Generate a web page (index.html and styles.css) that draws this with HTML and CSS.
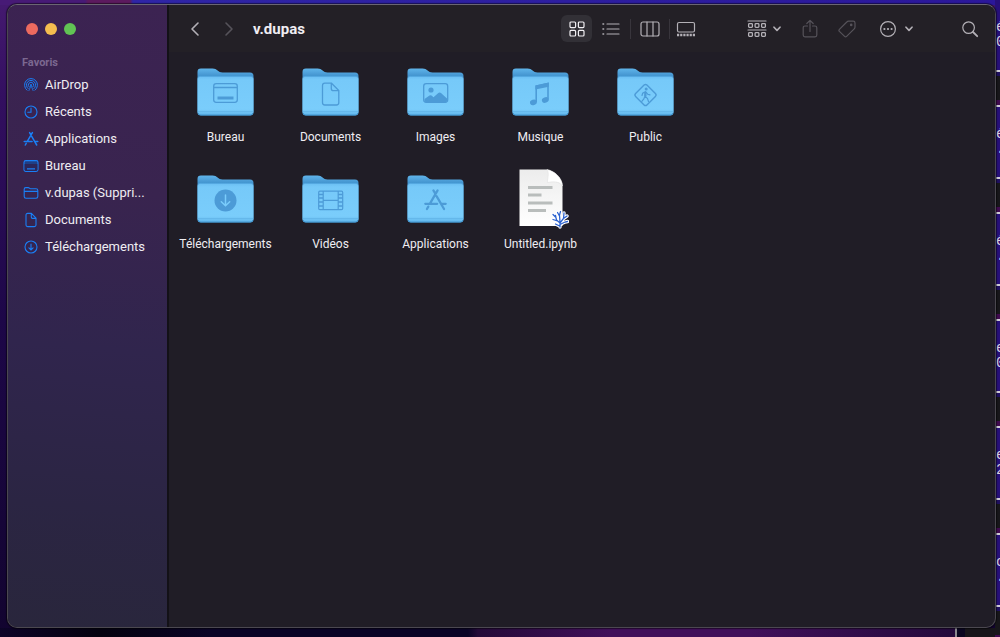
FILE: index.html
```html
<!DOCTYPE html>
<html lang="fr">

<head>
    <meta charset="UTF-8">
    <meta name="viewport" content="width=device-width, initial-scale=1">
    <title>v.dupas</title>
    <link rel="stylesheet" href="styles.css">
</head>

<body>
    <svg class="defs" aria-hidden="true">
        <defs>
            <linearGradient id="folder_back" x1="0" y1="0" x2="0" y2="1">
                <stop offset="0" stop-color="#5fb4ea" />
                <stop offset="0.18" stop-color="#3f8fcb" />
                <stop offset="1" stop-color="#4597d0" />
            </linearGradient>
            <linearGradient id="folder_front" x1="0" y1="0" x2="0" y2="1">
                <stop offset="0" stop-color="#69bdf2" />
                <stop offset="0.1" stop-color="#76c9f9" />
                <stop offset="0.85" stop-color="#7acdfb" />
                <stop offset="1" stop-color="#62b7ec" />
            </linearGradient>
            <linearGradient id="paper" x1="0" y1="0" x2="0" y2="1">
                <stop offset="0" stop-color="#ececec" />
                <stop offset="1" stop-color="#ffffff" />
            </linearGradient>
        </defs>
        <symbol id="folder" viewBox="0 0 57 48">
            <path d="M0.5 4C0.5 1.5 1.5 0.5 4 0.5H15.5C18 0.5 19.2 1.3 20.6 2.5C22 3.7 23.2 4.5 25.5 4.5H53C55.5 4.5 56.5 5.8 56.5 8V44C56.5 46.5 55.5 47.5 53 47.5H4C1.5 47.5 0.5 46.5 0.5 44Z" fill="url(#folder_back)" />
            <path d="M0.5 11C0.5 9 1.6 8 4 8H53C55.4 8 56.5 9 56.5 11V43.5C56.5 46 55.4 47 53 47H4C1.6 47 0.5 46 0.5 43.5Z" fill="url(#folder_front)" />
            <path d="M1.5 9.5C2 8.6 2.8 8.3 4 8.3H53C54.2 8.3 55 8.6 55.5 9.5" fill="none" stroke="#4c9fd9" stroke-width="0.9" />
            <path d="M1 43.5H56" stroke="#62b5e9" stroke-width="0.8" />
            <path d="M1.2 45C1.8 46.5 2.7 47 4 47H53C54.3 47 55.2 46.5 55.8 45" fill="none" stroke="#4397d0" />
        </symbol>
        <symbol id="apps" viewBox="0 0 16 16">
            <path d="M6.6 1.6L8 4M9.4 1.6L4.3 10.4M8.7 5.4L12.6 12.1M1.2 10.5H9.1M12 10.5H14.8M3.2 12.4L2.3 14M12.8 12.5L13.7 14" fill="none" stroke="currentColor" stroke-width="1.5" stroke-linecap="round" />
        </symbol>
        <symbol id="page" viewBox="0 0 16 16">
            <path d="M3 3C3 1.9 3.6 1.4 4.6 1.4H8.4L13 6.2V13C13 14.1 12.4 14.6 11.4 14.6H4.6C3.6 14.6 3 14.1 3 13ZM8.3 1.6V5.1C8.3 6 8.7 6.4 9.5 6.4H12.8" fill="none" stroke="currentColor" stroke-width="1.1" stroke-linejoin="round" />
        </symbol>
        <symbol id="coral" viewBox="0 0 20 20">
            <path d="M10 18V13M10 14L6.5 11L5.5 6.5M7.5 12L3 10.5M6 8.5L3 5.5M10 13L9.5 6L10.5 2.5M9.5 7L7.5 3.5M10 14L13.5 9.5L14 4M13.5 9.5L17 7M11 15L15 13L17.5 12.5M9.5 17L5.5 15" fill="none" stroke="currentColor" stroke-linecap="round" />
        </symbol>
    </svg>

    <!-- terminal window sticking out behind the finder -->
    <div class="terminal">
        <div class="term_block"><span>é</span><span>0</span></div>
        <div class="term_block"><span>é</span><span>.</span></div>
        <div class="term_block"><span>é</span><span>.</span></div>
        <div class="term_block"><span>e</span><span>0</span></div>
        <div class="term_block"><span>e</span><span>2</span></div>
        <div class="term_block"><span>c</span><span>.</span></div>
    </div>

    <div class="finder">
        <aside class="sidebar">
            <div class="lights">
                <button class="light red" aria-label="Fermer"></button>
                <button class="light yellow" aria-label="Réduire"></button>
                <button class="light green" aria-label="Agrandir"></button>
            </div>
            <h2 class="side_title">Favoris</h2>
            <nav class="side_list">
                <a class="side_item" href="#">
                    <svg class="side_icon" viewBox="0 0 16 16" fill="none" stroke="currentColor" stroke-linecap="round">
                        <path d="M4 13.2A6.5 6.5 0 1 1 12 13.2M5.1 11.6A4.6 4.6 0 1 1 10.9 11.6M6.3 10.1A2.7 2.7 0 1 1 9.7 10.1" />
                        <path d="M8 8.6L5.9 13.6M8 8.6L10.1 13.6" stroke-width="0.8" />
                        <circle cx="8" cy="8" r="0.9" fill="currentColor" stroke="none" />
                    </svg>
                    <span>AirDrop</span>
                </a>
                <a class="side_item" href="#">
                    <svg class="side_icon" viewBox="0 0 16 16" fill="none" stroke="currentColor" stroke-width="1.1" stroke-linecap="round">
                        <circle cx="8" cy="8" r="6" />
                        <path d="M8 4V8.3H4.8" />
                    </svg>
                    <span>Récents</span>
                </a>
                <a class="side_item" href="#">
                    <svg class="side_icon"><use href="#apps" /></svg>
                    <span>Applications</span>
                </a>
                <a class="side_item" href="#">
                    <svg class="side_icon" viewBox="0 0 16 16">
                        <rect x="1" y="2.6" width="14" height="10.8" rx="1.8" fill="#1f3f86" stroke="currentColor" stroke-width="1.1" />
                        <path d="M1.6 6H14.4V11.6Q14.4 12.9 13 12.9H3Q1.6 12.9 1.6 11.6Z" fill="#2c2659" />
                        <path d="M4 10.8H12" stroke="currentColor" stroke-width="1.3" />
                    </svg>
                    <span>Bureau</span>
                </a>
                <a class="side_item" href="#">
                    <svg class="side_icon" viewBox="0 0 16 16" fill="none" stroke="currentColor" stroke-width="1.1">
                        <path d="M1.2 4.2C1.2 3 1.8 2.6 2.8 2.6H5.2C6.3 2.6 6.4 3.8 7.5 3.8H13C14.2 3.8 14.8 4.4 14.8 5.4V11.6C14.8 12.8 14.2 13.3 13 13.3H3C1.8 13.3 1.2 12.8 1.2 11.6ZM1.2 6.4H14.8" />
                    </svg>
                    <span>v.dupas (Suppri...</span>
                </a>
                <a class="side_item" href="#">
                    <svg class="side_icon"><use href="#page" /></svg>
                    <span>Documents</span>
                </a>
                <a class="side_item" href="#">
                    <svg class="side_icon" viewBox="0 0 16 16" fill="none" stroke="currentColor" stroke-width="1.1" stroke-linecap="round">
                        <circle cx="8" cy="8" r="6" />
                        <path d="M8 5V10.8M5.9 8.9L8 11L10.1 8.9" />
                    </svg>
                    <span>Téléchargements</span>
                </a>
            </nav>
        </aside>

        <div class="content">
            <header class="toolbar">
                <button class="tool nav" aria-label="Précédent">
                    <svg width="10" height="16" viewBox="0 0 10 16"><path d="M8 2L2 8L8 14" /></svg>
                </button>
                <button class="tool nav off" aria-label="Suivant" disabled>
                    <svg width="10" height="16" viewBox="0 0 10 16"><path d="M2 2L8 8L2 14" /></svg>
                </button>
                <h1 class="title">v.dupas</h1>
                <div class="views">
                    <button class="tool view active" aria-label="Icônes">
                        <svg width="16" height="16" viewBox="0 0 16 16">
                            <rect x="1" y="1" width="5.6" height="5.6" rx="1" />
                            <rect x="9.4" y="1" width="5.6" height="5.6" rx="1" />
                            <rect x="1" y="9.4" width="5.6" height="5.6" rx="1" />
                            <rect x="9.4" y="9.4" width="5.6" height="5.6" rx="1" />
                        </svg>
                    </button>
                    <button class="tool view wide" aria-label="Liste">
                        <svg width="18" height="14" viewBox="0 0 18 14">
                            <path d="M5 2H17M5 7H17M5 12H17" />
                            <path d="M1 2H1.6M1 7H1.6M1 12H1.6" stroke-width="1.6" />
                        </svg>
                    </button>
                    <span class="sep"></span>
                    <button class="tool view wide" aria-label="Colonnes">
                        <svg width="20" height="16" viewBox="0 0 20 16">
                            <rect x="1" y="1" width="18" height="14" rx="2" />
                            <path d="M7 1V15M13 1V15" />
                        </svg>
                    </button>
                    <span class="sep"></span>
                    <button class="tool view" aria-label="Galerie">
                        <svg width="20" height="16" viewBox="0 0 20 16">
                            <rect x="1.5" y="1.5" width="17" height="9.5" rx="1.5" />
                            <path d="M1 14H19" stroke-width="2.4" stroke-dasharray="2.2 0.96" />
                        </svg>
                    </button>
                </div>
                <button class="tool group" aria-label="Grouper">
                    <svg width="20" height="18" viewBox="0 0 20 18">
                        <path d="M1 1H19M1 10H19" />
                        <g stroke-width="1.3">
                            <rect x="1.6" y="3.6" width="3.8" height="3.8" rx="0.8" />
                            <rect x="8.1" y="3.6" width="3.8" height="3.8" rx="0.8" />
                            <rect x="14.6" y="3.6" width="3.8" height="3.8" rx="0.8" />
                            <rect x="1.6" y="12.6" width="3.8" height="3.8" rx="0.8" />
                            <rect x="8.1" y="12.6" width="3.8" height="3.8" rx="0.8" />
                            <rect x="14.6" y="12.6" width="3.8" height="3.8" rx="0.8" />
                        </g>
                    </svg>
                    <svg width="8" height="6" viewBox="0 0 8 6"><path class="arrow" d="M1 1.2L4 4.4L7 1.2" /></svg>
                </button>
                <div class="actions">
                    <button class="tool off" aria-label="Partager" disabled>
                        <svg width="18" height="20" viewBox="0 0 18 20">
                            <path d="M6.5 7H4C2.8 7 2.2 7.6 2.2 8.8V16C2.2 17.2 2.8 17.8 4 17.8H14C15.2 17.8 15.8 17.2 15.8 16V8.8C15.8 7.6 15.2 7 14 7H11.5M9 12.5V1.6M5.8 4.5L9 1.4L12.2 4.5" />
                        </svg>
                    </button>
                    <button class="tool off" aria-label="Tags" disabled>
                        <svg width="18" height="18" viewBox="0 0 18 18">
                            <path d="M1.4 9.4L8.8 2Q9.5 1.2 10.6 1.2H15.2Q17 1.2 17 3V7Q17 8 16.2 8.8L8.6 16.4Q7.6 17.4 6.6 16.4L1.4 11.4Q0.5 10.4 1.4 9.4Z" />
                            <circle cx="13.2" cy="4.9" r="0.7" />
                        </svg>
                    </button>
                </div>
                <button class="tool group" aria-label="Actions">
                    <svg width="18" height="18" viewBox="0 0 18 18">
                        <circle cx="9" cy="9" r="7.4" />
                        <path d="M5.4 9H5.41M9 9H9.01M12.6 9H12.61" stroke-width="2.2" />
                    </svg>
                    <svg width="8" height="6" viewBox="0 0 8 6"><path class="arrow" d="M1 1.2L4 4.4L7 1.2" /></svg>
                </button>
                <button class="tool search" aria-label="Rechercher">
                    <svg width="18" height="18" viewBox="0 0 18 18">
                        <circle cx="7.6" cy="7.6" r="5.8" />
                        <path d="M12 12L16.2 16.2" stroke-width="1.8" />
                    </svg>
                </button>
            </header>

            <main class="files">
                <a class="file" href="#">
                    <svg class="file_icon" viewBox="0 0 57 48">
                        <use href="#folder" />
                        <g fill="none" stroke="#4c9bd7" stroke-width="1.3">
                            <rect x="16.7" y="15.7" width="23.6" height="18.6" rx="2.5" />
                            <path d="M17 19.5H40" />
                            <path d="M20.5 30H36.5" stroke-width="3" />
                        </g>
                    </svg>
                    <span>Bureau</span>
                </a>
                <a class="file" href="#">
                    <svg class="file_icon" viewBox="0 0 57 48">
                        <use href="#folder" />
                        <path d="M20.5 17.5Q20.5 15.2 22.8 15.2H29.5L36.8 22.5V34.5Q36.8 37 34.4 37H22.8Q20.5 37 20.5 34.5ZM29.3 15.4V20.5Q29.3 22.7 31.5 22.7H36.6" fill="none" stroke="#4c9bd7" stroke-width="1.3" />
                    </svg>
                    <span>Documents</span>
                </a>
                <a class="file" href="#">
                    <svg class="file_icon" viewBox="0 0 57 48">
                        <use href="#folder" />
                        <rect x="16.7" y="15.7" width="24" height="18.6" rx="2.5" fill="none" stroke="#4c9bd7" stroke-width="1.3" />
                        <circle cx="24" cy="22" r="2.6" fill="#4c9bd7" />
                        <path d="M17.5 31L22.5 27.5Q23.5 26.8 24.5 27.6L26.5 29.3L31.3 25Q32.7 24 34 25L40 30.5V32.5Q40 34 38.5 34H19Q17.5 34 17.5 32.5Z" fill="#4c9bd7" />
                    </svg>
                    <span>Images</span>
                </a>
                <a class="file" href="#">
                    <svg class="file_icon" viewBox="0 0 57 48">
                        <use href="#folder" />
                        <path d="M24.2 34V18.2L36 15.6V31.5" fill="none" stroke="#4c9bd7" stroke-width="1.6" />
                        <path d="M23.4 17.4L36.8 14.6V18.8L23.4 21.6Z" fill="#4c9bd7" />
                        <ellipse cx="21.4" cy="34.4" rx="3.5" ry="2.7" fill="#4c9bd7" transform="rotate(-20 21.4 34.4)" />
                        <ellipse cx="33.3" cy="32" rx="3.5" ry="2.7" fill="#4c9bd7" transform="rotate(-20 33.3 32)" />
                    </svg>
                    <span>Musique</span>
                </a>
                <a class="file" href="#">
                    <svg class="file_icon" viewBox="0 0 57 48">
                        <use href="#folder" />
                        <rect x="20.5" y="19" width="16" height="16" rx="2" fill="none" stroke="#4c9bd7" stroke-width="1.4" transform="rotate(45 28.5 27)" />
                        <circle cx="29.2" cy="21" r="1.5" fill="#4c9bd7" />
                        <path d="M28.5 23.5L28 28L30.5 30.5L31.5 33.5M28 28L26.8 31L24.8 33.3M28.3 23.8L25.7 25.2L25 27.5M28.8 24L30.8 26.3L33 26.8" fill="none" stroke="#4c9bd7" stroke-width="1.2" stroke-linecap="round" />
                        <path d="M28.4 24V28" stroke="#4c9bd7" stroke-width="2.2" />
                    </svg>
                    <span>Public</span>
                </a>
                <a class="file" href="#">
                    <svg class="file_icon" viewBox="0 0 57 48">
                        <use href="#folder" />
                        <circle cx="28.5" cy="25.5" r="11" fill="#4c9bd7" />
                        <path d="M28.5 20V30.5M24.3 26.7L28.5 30.8L32.7 26.7" fill="none" stroke="#7accfb" stroke-width="1.5" stroke-linecap="round" />
                    </svg>
                    <span>Téléchargements</span>
                </a>
                <a class="file" href="#">
                    <svg class="file_icon" viewBox="0 0 57 48">
                        <use href="#folder" />
                        <rect x="16.7" y="16.2" width="24" height="18.4" rx="1.2" fill="none" stroke="#4c9bd7" stroke-width="1.2" />
                        <path d="M21.2 16V35M36.2 16V35M21 25.4H36" stroke="#4c9bd7" stroke-width="1.2" />
                        <path d="M17 19.5H21M17 23H21M17 27H21M17 31H21M36 19.5H40.5M36 23H40.5M36 27H40.5M36 31H40.5" stroke="#4c9bd7" stroke-width="1.3" />
                    </svg>
                    <span>Vidéos</span>
                </a>
                <a class="file" href="#">
                    <svg class="file_icon" viewBox="0 0 57 48">
                        <use href="#folder" />
                        <use class="badge_apps" href="#apps" x="16.5" y="13" width="24" height="24" />
                    </svg>
                    <span>Applications</span>
                </a>
                <a class="file" href="#">
                    <svg class="file_icon doc" viewBox="0 0 57 60">
                        <path d="M7.5 0.5H35C42 1.5 50.5 9 50.5 17V57H7.5Z" fill="url(#paper)" />
                        <path d="M35 0.5C37.5 4 35.5 9 35.5 13.5C41 12.5 47.5 12 50.5 17C50.5 9 42 1.5 35 0.5Z" fill="#ffffff" stroke="#dcdcdc" stroke-width="0.5" />
                        <path d="M16 18.5H40.5M16 26H29.5M16 34H40.5M16 41.5H34" stroke="#b9bdbc" stroke-width="3" />
                        <use class="coral_edge" href="#coral" x="38" y="40" width="20" height="20" />
                        <use class="coral" href="#coral" x="38" y="40" width="20" height="20" />
                    </svg>
                    <span>Untitled.ipynb</span>
                </a>
            </main>
        </div>
    </div>
</body>

</html>
```
FILE: styles.css
```css
* {
    box-sizing: border-box;
}

body {
    margin: 0;
    min-height: 100vh;
    padding: 4px 4px 9px 7px;
    display: flex;
    position: relative;
    font-family: Roboto, "Liberation Sans", sans-serif;
    color: #efedf2;
    background:
        linear-gradient(90deg, transparent 955px, #8b8990 955px, #8b8990 957px, #0a0620 957px, #0a0620 965px, #17151a 965px) bottom / 100% 9px no-repeat,
        linear-gradient(90deg, #0d0428, #04020f 100px, #0a0426 210px, #0a0426 468px, #240a38 478px, #41105a 610px, #41105a 750px, #240a3c 950px) bottom / 100% 9px no-repeat,
        linear-gradient(90deg, #471a76 85px, #5c1a5e 88px, #5c1a5e 130px, #2f25a6 133px, #2b179a) top / 100% 5px no-repeat,
        linear-gradient(#451a70, #330f60 15%, #1d0748 50%, #12042f);
}

h1,
h2 {
    margin: 0;
}

a {
    color: inherit;
    text-decoration: none;
}

button {
    padding: 0;
    border: 0;
    background: none;
    color: inherit;
}

.defs {
    position: absolute;
    width: 0;
    height: 0;
}

.terminal {
    position: absolute;
    top: 0;
    right: 0;
    bottom: 0;
    width: 5px;
    overflow: hidden;
    background: #27107a;
}

.term_block {
    height: 107px;
    padding: 20px 0 0 1px;
    display: flex;
    flex-direction: column;
    font: 14px/15px "Liberation Mono", monospace;
    color: #d8d4e0;
    background: linear-gradient(transparent 70px, #d0cdd8 70px, #d0cdd8 72px, #1f1060 72px, #1f1060 76px, #17161a 76px, #17161a 100px, #400a50 100px, #400a50 105px, #d0cdd8 105px);
}

.finder {
    flex: 1;
    display: flex;
    position: relative;
    overflow: hidden;
    border: 1px solid #4b4850;
    border-top-color: #6a6672;
    border-radius: 10px;
    background: #201d26;
    box-shadow: 0 0 1px 1px rgba(0, 0, 0, 0.5);
}

/* sidebar */

.sidebar {
    width: 161px;
    flex: none;
    padding: 18px 0 0 14px;
    border-right: 2px solid #131117;
    background: linear-gradient(185deg, #3c2352, #39244f 30%, #30254d 55%, #2b2543 80%, #29263c);
}

.lights {
    display: flex;
    gap: 7px;
    padding-left: 4px;
}

.light {
    width: 12px;
    height: 12px;
    border-radius: 50%;
}

.red {
    background: #ed6a5f;
}

.yellow {
    background: #f5bd4f;
}

.green {
    background: #61c454;
}

.side_title {
    margin-top: 21px;
    font-size: 11px;
    line-height: 14px;
    font-weight: 700;
    color: #7b6890;
}

.side_list {
    display: flex;
    flex-direction: column;
    margin-top: 1px;
}

.side_item {
    height: 27px;
    display: flex;
    align-items: center;
    gap: 6px;
    padding-left: 1px;
    font-size: 13px;
    white-space: nowrap;
}

.side_icon {
    width: 16px;
    height: 16px;
    color: #1a7ff5;
}

/* toolbar */

.content {
    flex: 1;
    min-width: 0;
}

.toolbar {
    height: 47px;
    display: flex;
    align-items: center;
    padding: 0 16px 0 20px;
    background: #232026;
}

.tool {
    flex: none;
    display: flex;
    align-items: center;
    justify-content: center;
    color: #b3b0b6;
}

.tool svg {
    display: block;
    fill: none;
    stroke: currentColor;
    stroke-width: 1.2;
    stroke-linecap: round;
    stroke-linejoin: round;
}

.tool svg [stroke-dasharray] {
    stroke-linecap: butt;
}

.tool .arrow {
    stroke-width: 1.6;
}

.nav {
    width: 12px;
    margin-right: 22px;
}

.nav svg {
    stroke-width: 1.6;
}

.off {
    color: #56535a;
}

.title {
    flex: 1;
    margin-left: -4px;
    font-size: 15px;
    font-weight: 700;
}

.views {
    display: flex;
    align-items: center;
    margin-right: 46px;
}

.view {
    width: 31px;
    height: 27px;
    border-radius: 6px;
}

.wide {
    width: 38px;
}

.active {
    background: #323036;
    color: #f0eef2;
}

.sep {
    width: 1px;
    height: 20px;
    background: #38353c;
}

.group {
    width: 34px;
    justify-content: space-between;
}

.actions {
    display: flex;
    align-items: center;
    gap: 19px;
    margin: 0 23px 0 20px;
}

.search {
    margin-left: 48px;
}

/* files */

.files {
    display: grid;
    grid-template-columns: repeat(auto-fill, 105px);
    grid-auto-rows: 107px;
    padding: 7px 250px 0 4px;
}

.file {
    display: flex;
    flex-direction: column;
    align-items: center;
    font-size: 12px;
    line-height: 16px;
}

.file_icon {
    width: 57px;
    height: 48px;
    margin: 9px 0 13px;
}

.doc {
    height: 60px;
    margin: 3px 0 7px;
}

.badge_apps {
    color: #4c9bd7;
}

.coral_edge {
    color: #fff;
    stroke-width: 3.4;
}

.coral {
    color: #2c62cf;
    stroke-width: 1.3;
}
```
